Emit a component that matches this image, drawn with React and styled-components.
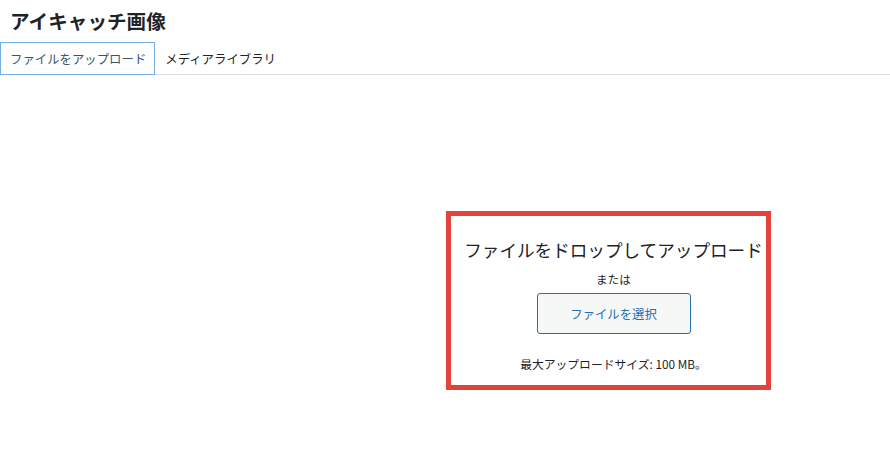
import React from 'react';
import styled, { createGlobalStyle } from 'styled-components';

const GlobalStyle = createGlobalStyle`
  html, body {
    margin: 0;
    padding: 0;
    background: #fff;
  }
  body {
    font-family: "Noto Sans CJK JP", "Noto Sans", sans-serif;
    color: #1d2327;
  }
`;

const App = () => {
  return (
    <Page>
      <GlobalStyle />
      <Title>アイキャッチ画像</Title>
      <TabBar>
        <Tab active>ファイルをアップロード</Tab>
        <Tab>メディアライブラリ</Tab>
      </TabBar>
      <UploadArea>
        <DropBox>
          <DropTitle>ファイルをドロップしてアップロード</DropTitle>
          <Or>または</Or>
          <SelectButton type="button">ファイルを選択</SelectButton>
          <MaxSize>最大アップロードサイズ: 100 MB。</MaxSize>
        </DropBox>
      </UploadArea>
    </Page>
  );
};

export default App;

const Page = styled.div`
  width: 890px;
  height: 472px;
  overflow: hidden;
  background: #fff;
`;

const Title = styled.h1`
  margin: 0;
  padding: 7px 10px 0;
  font-size: 19.6px;
  line-height: 28px;
  font-weight: 700;
  color: #1d2327;
`;

const TabBar = styled.div`
  display: flex;
  margin-top: 7px;
  border-bottom: 1px solid #dcdcde;
  height: 32px;
`;

const Tab = styled.div`
  display: flex;
  align-items: center;
  padding: 0 8px 0 9px;
  height: 33px;
  box-sizing: border-box;
  font-size: 12.4px;
  color: ${p => (p.active ? '#3c5266' : '#1d2327')};
  border: 1px solid ${p => (p.active ? '#72aee6' : 'transparent')};
  background: ${p => (p.active ? '#fff' : 'transparent')};
`;

const UploadArea = styled.div`
  padding: 136px 0 0 446px;
`;

const DropBox = styled.div`
  width: 325px;
  height: 179px;
  box-sizing: border-box;
  border: 5px solid #e3433a;
  display: flex;
  flex-direction: column;
  align-items: center;
  padding: 22px 0 0 10px;
`;

const DropTitle = styled.div`
  font-size: 17.6px;
  line-height: 24px;
  color: #1d2327;
  white-space: nowrap;
`;

const Or = styled.div`
  margin-top: 9px;
  font-size: 11.6px;
  line-height: 16px;
  color: #1d2327;
`;

const SelectButton = styled.button`
  margin-top: 6px;
  width: 154px;
  height: 41px;
  box-sizing: border-box;
  border: 1px solid #2271b1;
  border-radius: 3px;
  background: #f6f7f7;
  color: #2271b1;
  font-family: inherit;
  font-size: 12.4px;
  cursor: pointer;
`;

const MaxSize = styled.div`
  margin-top: 22px;
  font-size: 11.8px;
  line-height: 16px;
  color: #1d2327;
`;
